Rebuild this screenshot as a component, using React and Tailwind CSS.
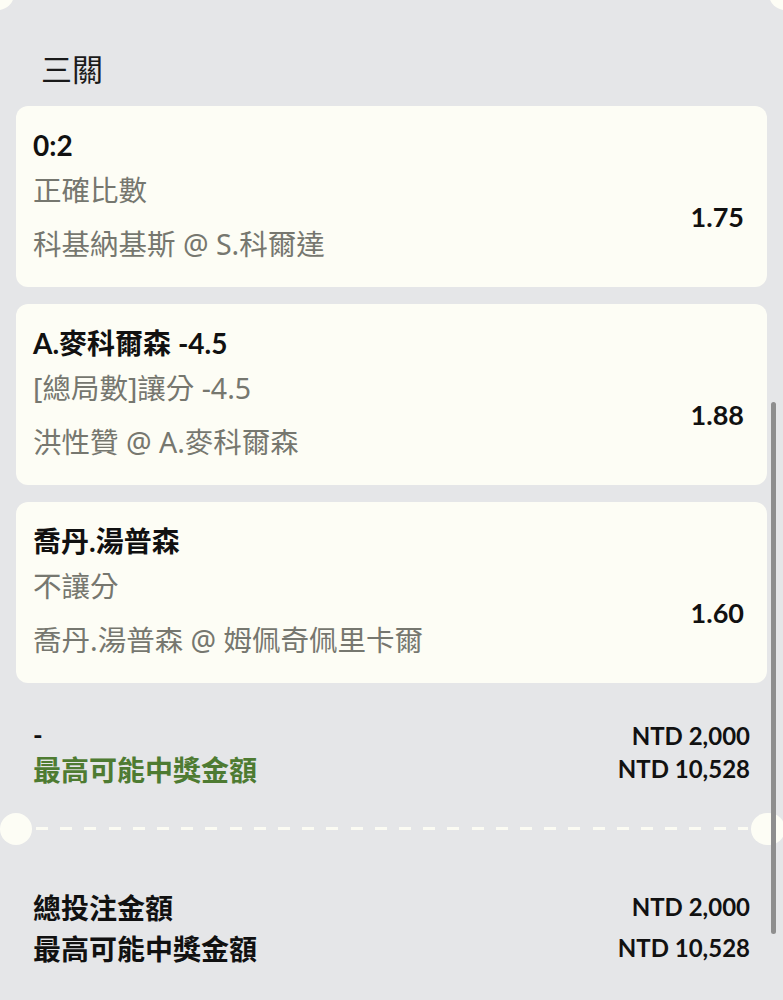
import React from "react";

const latin = { fontFamily: 'Lato, "Noto Sans CJK TC", sans-serif' };
const cjk = { fontFamily: '"Noto Sans CJK TC", "Noto Sans", sans-serif' };
const gray = { fontFamily: '"Noto Sans", "Noto Sans CJK TC", sans-serif' };

const bets = [
  { title: "0:2", market: "正確比數", match: "科基納基斯 @ S.科爾達", odds: "1.75" },
  { title: "A.麥科爾森 -4.5", market: "[總局數]讓分 -4.5", match: "洪性贊 @ A.麥科爾森", odds: "1.88" },
  { title: "喬丹.湯普森", market: "不讓分", match: "喬丹.湯普森 @ 姆佩奇佩里卡爾", odds: "1.60" },
];

function BetCard({ b }) {
  return (
    <div className="h-[181px] rounded-[12px] bg-[#fdfdf5] pl-[17px] pr-[23px] pt-[22px]">
      <div className="h-[34px] text-[28px] leading-[34px] font-bold text-[#111]" style={latin}>
        {b.title}
      </div>
      <div className="mt-[8px] flex items-center justify-between">
        <div className="flex flex-col gap-[14px] text-[28.5px] text-[#76776f]" style={gray}>
          <div className="h-[40px] leading-[40px]">{b.market}</div>
          <div className="h-[40px] leading-[40px]">{b.match}</div>
        </div>
        <div className="text-[27px] font-bold text-[#111]" style={latin}>
          {b.odds}
        </div>
      </div>
    </div>
  );
}

export default function App() {
  return (
    <div className="relative h-[1000px] w-full overflow-hidden bg-[#e5e6e8]">
      {/* top notch bumps */}
      <div className="absolute left-[-18px] top-[-22px] h-[32px] w-[32px] rounded-full bg-[#fdfdf5]" />
      <div className="absolute right-[-18px] top-[-22px] h-[32px] w-[32px] rounded-full bg-[#fdfdf5]" />

      <div className="pl-[41px] pt-[48px]">
        <div className="h-[40px] text-[31px] leading-[40px] text-[#1a1a1a]" style={cjk}>
          三關
        </div>
      </div>

      <div className="mt-[18px] flex flex-col gap-[17px] px-[16px]">
        {bets.map((b, i) => (
          <BetCard key={i} b={b} />
        ))}
      </div>

      <div className="mt-[36px] px-[33px]">
        <div className="flex h-[33px] items-center justify-between">
          <span className="text-[26px] font-bold text-[#111]" style={latin}>-</span>
          <span className="text-[24px] font-bold text-[#111]" style={latin}>NTD 2,000</span>
        </div>
        <div className="flex h-[33px] items-center justify-between">
          <span className="text-[28px] font-bold text-[#4e7b32]" style={cjk}>最高可能中獎金額</span>
          <span className="text-[24px] font-bold text-[#111]" style={latin}>NTD 10,528</span>
        </div>
      </div>

      {/* perforation divider */}
      <div className="relative mt-[28px] h-[32px]">
        <div className="absolute left-0 top-0 h-[32px] w-[32px] rounded-full bg-[#fdfdf5]" />
        <div className="absolute right-[-2px] top-0 h-[32px] w-[34px] rounded-full bg-[#fdfdf5]" />
        <div className="absolute left-[36px] right-[35px] top-[14px] h-[3px] bg-[repeating-linear-gradient(90deg,#fbfbf3_0px,#fbfbf3_12px,transparent_12px,transparent_24.2px)]" />
      </div>

      <div className="mt-[41px] px-[33px]">
        <div className="flex h-[41px] items-center justify-between">
          <span className="text-[28px] font-bold text-[#111]" style={cjk}>總投注金額</span>
          <span className="text-[24px] font-bold text-[#111]" style={latin}>NTD 2,000</span>
        </div>
        <div className="flex h-[41px] items-center justify-between">
          <span className="text-[28px] font-bold text-[#111]" style={cjk}>最高可能中獎金額</span>
          <span className="text-[24px] font-bold text-[#111]" style={latin}>NTD 10,528</span>
        </div>
      </div>

      {/* scrollbar */}
      <div className="absolute right-[7px] top-[402px] h-[532px] w-[5px] rounded-full bg-[#8e8e8e]" />
    </div>
  );
}
